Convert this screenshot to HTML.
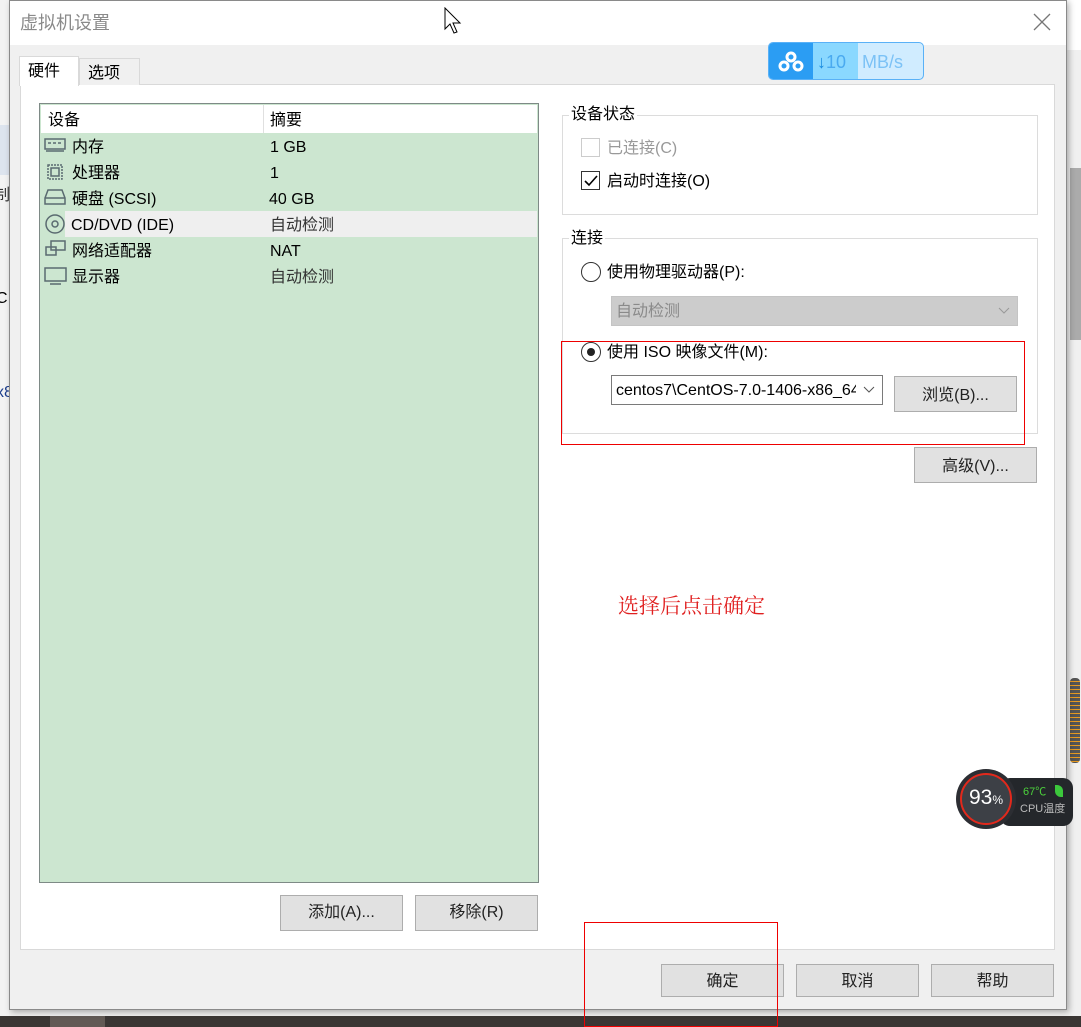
<!DOCTYPE html>
<html><head><meta charset="utf-8"><style>
*{box-sizing:border-box;margin:0;padding:0}
body{width:1081px;height:1027px;position:relative;overflow:hidden;background:#f0f0f0;font-family:"Liberation Sans","Noto Sans CJK SC",sans-serif;font-size:16px;color:#000}
.a{position:absolute}
.btn{position:absolute;background:#e1e1e1;border:1px solid #adadad;text-align:center;font-size:16px;color:#222}
.t{position:absolute;white-space:nowrap;line-height:24px;height:24px}
</style></head><body>
<div class="a" style="left:0;top:0;width:9px;height:1027px;background:#f3f3f3"></div>
<div class="a" style="left:0;top:125px;width:9px;height:50px;background:#dde4ee"></div>
<div class="t" style="left:-6px;top:184px;font-size:16px;color:#333">制</div>
<div class="t" style="left:-4px;top:287px;font-size:16px;color:#000">C</div>
<div class="t" style="left:-4px;top:381px;font-size:16px;color:#1a3c8c">x8</div>
<div class="a" style="left:1067px;top:0;width:14px;height:1027px;background:#f0f0f0"></div>
<div class="a" style="left:1067px;top:0;width:14px;height:50px;background:#fff"></div>
<div class="a" style="left:1070px;top:168px;width:11px;height:172px;background:#ababab"></div>
<div class="a" style="left:1070px;top:678px;width:10px;height:85px;background:#555;border-radius:4px;background-image:repeating-linear-gradient(#555 0 3px,#e89a20 3px 4px)"></div>
<div class="a" style="left:0;top:1016px;width:1081px;height:11px;background:#3a3634"></div>
<div class="a" style="left:50px;top:1016px;width:55px;height:11px;background:#625a55"></div>
<div class="a" style="left:9px;top:0;width:1058px;height:1010px;background:#f0f0f0;border:1px solid #8a8a8a;box-shadow:2px 2px 6px rgba(0,0,0,.3)"></div>
<div class="a" style="left:10px;top:1px;width:1056px;height:44px;background:#fff"></div>
<div class="t" style="left:20px;top:11px;font-size:18px;color:#8a8a8a">虚拟机设置</div>
<svg class="a" style="left:1033px;top:13px" width="18" height="18"><path d="M1 1L17 17M17 1L1 17" stroke="#777" stroke-width="1.3"/></svg>
<svg class="a" style="left:444px;top:7px" width="20" height="28"><path d="M1 1L1 22L6 17L10 26L13 25L9 16L16 16Z" fill="#fff" stroke="#000" stroke-width="1"/></svg>
<div class="a" style="left:20px;top:84px;width:1035px;height:866px;background:#fff;border:1px solid #d9d9d9"></div>
<div class="a" style="left:19px;top:56px;width:60px;height:30px;background:#fff;border:1px solid #d9d9d9;border-bottom:none"></div>
<div class="t" style="left:28px;top:60px">硬件</div>
<div class="a" style="left:79px;top:58px;width:61px;height:27px;background:#f0f0f0;border:1px solid #d9d9d9;border-bottom:none"></div>
<div class="t" style="left:88px;top:62px">选项</div>
<div class="a" style="left:39px;top:103px;width:500px;height:780px;background:#cce6d0;border:1px solid #7e8a86"></div>
<div class="a" style="left:41px;top:105px;width:496px;height:28px;background:#fff"></div>
<div class="a" style="left:263px;top:105px;width:1px;height:28px;background:#e0e0e0"></div>
<div class="t" style="left:48px;top:109px">设备</div>
<div class="t" style="left:270px;top:109px">摘要</div>
<div class="a" style="left:65px;top:211px;width:472px;height:26px;background:#efefef"></div>
<div class="t" style="left:72px;top:136px">内存</div><div class="t" style="left:270px;top:136px">1 GB</div>
<div class="t" style="left:72px;top:162px">处理器</div><div class="t" style="left:270px;top:162px">1</div>
<div class="t" style="left:72px;top:188px">硬盘 (SCSI)</div><div class="t" style="left:269px;top:188px">40 GB</div>
<div class="t" style="left:71px;top:214px">CD/DVD (IDE)</div><div class="t" style="left:270px;top:214px;color:#333">自动检测</div>
<div class="t" style="left:72px;top:240px">网络适配器</div><div class="t" style="left:270px;top:240px">NAT</div>
<div class="t" style="left:72px;top:266px">显示器</div><div class="t" style="left:270px;top:266px;color:#333">自动检测</div>
<svg class="a" style="left:43px;top:136px" width="26" height="160" fill="none" stroke="#5a6a70" stroke-width="1.5">
<rect x="2" y="3" width="20" height="10"/><path d="M5 7h3M10 7h3M15 7h3M3 15h18"/>
<rect x="5" y="29" width="14" height="14" stroke-dasharray="2 1"/><rect x="8" y="32" width="8" height="8"/>
<path d="M2 62L5 54H19L22 62V68H2ZM2 62H22"/>
<circle cx="12" cy="88" r="9"/><circle cx="12" cy="88" r="3"/>
<rect x="8" y="105" width="14" height="9"/><rect x="3" y="111" width="10" height="8"/>
<rect x="2" y="132" width="21" height="13"/><path d="M7 148h11"/>
</svg>
<div class="btn" style="left:280px;top:895px;width:123px;height:36px;line-height:34px">添加(A)...</div>
<div class="btn" style="left:415px;top:895px;width:123px;height:36px;line-height:34px">移除(R)</div>
<div class="a" style="left:562px;top:115px;width:476px;height:100px;border:1px solid #dcdcdc"></div>
<div class="t" style="left:569px;top:103px;background:#fff;padding:0 2px">设备状态</div>
<div class="a" style="left:581px;top:138px;width:19px;height:19px;border:1px solid #ccc"></div>
<div class="t" style="left:607px;top:137px;color:#999">已连接(C)</div>
<div class="a" style="left:581px;top:171px;width:19px;height:19px;border:1px solid #333"></div>
<svg class="a" style="left:583px;top:174px" width="16" height="14"><path d="M2 7L6 11L14 2" stroke="#000" stroke-width="1.6" fill="none"/></svg>
<div class="t" style="left:607px;top:170px">启动时连接(O)</div>
<div class="a" style="left:562px;top:238px;width:476px;height:196px;border:1px solid #dcdcdc"></div>
<div class="t" style="left:569px;top:227px;background:#fff;padding:0 2px">连接</div>
<div class="a" style="left:581px;top:262px;width:20px;height:20px;border:1px solid #333;border-radius:50%"></div>
<div class="t" style="left:607px;top:261px">使用物理驱动器(P):</div>
<div class="a" style="left:611px;top:296px;width:407px;height:30px;background:#ccc;border:1px solid #c4c4c4"></div>
<div class="t" style="left:616px;top:300px;color:#8a8a8a">自动检测</div>
<svg class="a" style="left:998px;top:307px" width="12" height="8"><path d="M1 1L6 6L11 1" stroke="#999" fill="none"/></svg>
<div class="a" style="left:581px;top:342px;width:20px;height:20px;border:1px solid #333;border-radius:50%"></div>
<div class="a" style="left:587px;top:348px;width:8px;height:8px;background:#222;border-radius:50%"></div>
<div class="t" style="left:607px;top:341px">使用 ISO 映像文件(M):</div>
<div class="a" style="left:611px;top:375px;width:272px;height:30px;background:#fff;border:1px solid #7a7a7a;overflow:hidden"><div class="t" style="left:4px;top:3px;width:240px;overflow:hidden">centos7\CentOS-7.0-1406-x86_64</div></div>
<svg class="a" style="left:863px;top:386px" width="12" height="8"><path d="M1 1L6 6L11 1" stroke="#555" fill="none"/></svg>
<div class="btn" style="left:894px;top:376px;width:123px;height:36px;line-height:38px">浏览(B)...</div>
<div class="a" style="left:561px;top:341px;width:464px;height:104px;border:1px solid #e00"></div>
<div class="btn" style="left:914px;top:447px;width:123px;height:36px;line-height:38px">高级(V)...</div>
<div class="t" style="left:618px;top:592px;font-size:21px;line-height:26px;height:26px;color:#e02020;font-family:'Noto Serif CJK SC',serif">选择后点击确定</div>
<div class="a" style="left:768px;top:42px;width:156px;height:38px;border:1px solid #59b1f7;border-radius:5px;overflow:hidden;background:#d0ecff">
<div class="a" style="left:0;top:0;width:44px;height:38px;background:#2b9df3"></div>
<div class="a" style="left:44px;top:0;width:45px;height:38px;background:#8ad8ff"></div>
<svg class="a" style="left:9px;top:8px" width="26" height="22" fill="none" stroke="#fff" stroke-width="3"><circle cx="13" cy="6" r="4"/><circle cx="6" cy="15" r="4"/><circle cx="20" cy="15" r="4"/></svg>
<div class="t" style="left:48px;top:7px;font-size:18px;color:#1a8ce0">↓<span style="color:#4aaaf0">10</span></div>
<div class="t" style="left:93px;top:7px;font-size:18px;color:#7cc2f6">MB/s</div>
</div>
<div class="a" style="left:1000px;top:778px;width:73px;height:48px;background:#24272b;border-radius:10px"></div>
<div class="t" style="left:1023px;top:780px;font-size:11px;color:#4cd23c">67℃</div>
<div class="a" style="left:1055px;top:785px;width:8px;height:12px;background:#3cc83c;border-radius:0 6px 0 6px"></div>
<div class="t" style="left:1020px;top:797px;font-size:11px;color:#bbb">CPU温度</div>
<div class="a" style="left:956px;top:769px;width:60px;height:60px;background:#2c2e33;border-radius:50%"></div>
<div class="a" style="left:960px;top:773px;width:52px;height:52px;border:2px solid #e2291c;border-radius:50%;background:#3d4046"></div>
<div class="t" style="left:969px;top:786px;font-size:21px;color:#fff">93<span style="font-size:12px">%</span></div>
<div class="btn" style="left:661px;top:964px;width:123px;height:33px;line-height:33px">确定</div>
<div class="btn" style="left:796px;top:964px;width:123px;height:33px;line-height:33px">取消</div>
<div class="btn" style="left:931px;top:964px;width:123px;height:33px;line-height:33px">帮助</div>
<div class="a" style="left:584px;top:922px;width:194px;height:105px;border:1px solid #e00"></div>
</body></html>
